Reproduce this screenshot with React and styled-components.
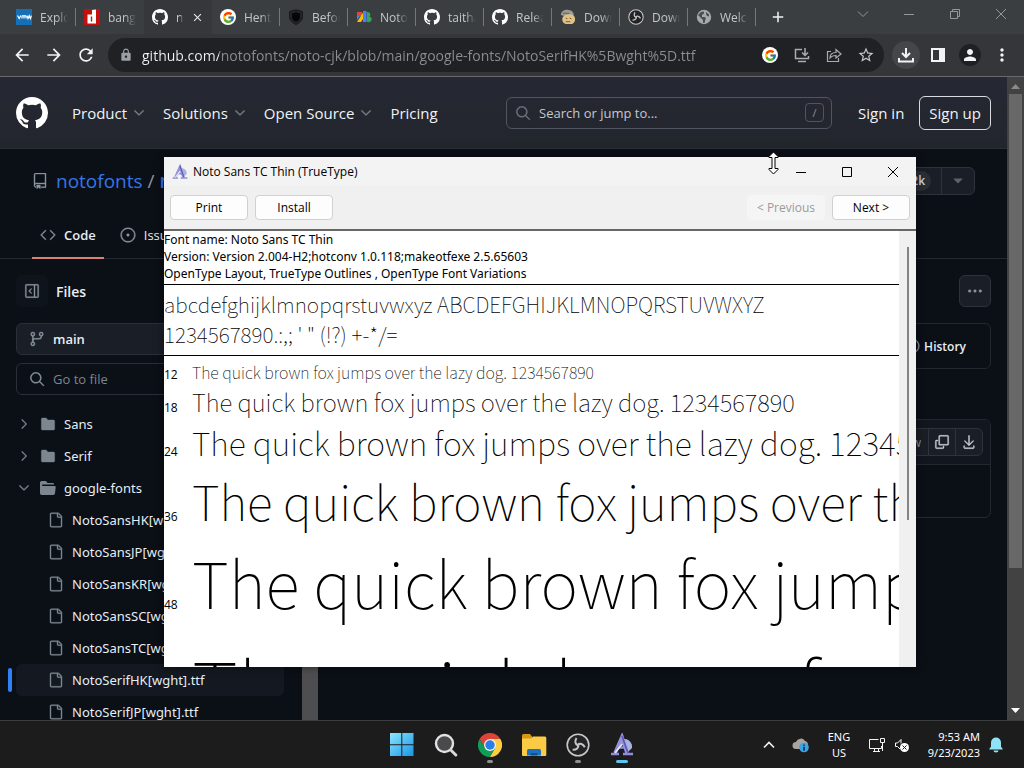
import React from "react";
import styled, { createGlobalStyle, css } from "styled-components";
import {
  GoRepo,
  GoCode,
  GoIssueOpened,
  GoSidebarExpand,
  GoGitBranch,
  GoSearch,
  GoChevronDown,
  GoChevronRight,
  GoFileDirectoryFill,
  GoFile,
  GoHistory,
  GoCopy,
  GoDownload,
  GoKebabHorizontal,
  GoTriangleDown,
} from "react-icons/go";
import {
  MdArrowBack,
  MdArrowForward,
  MdRefresh,
  MdLock,
  MdStarBorder,
  MdPerson,
  MdMoreVert,
  MdAdd,
  MdClose,
} from "react-icons/md";
import { FcGoogle } from "react-icons/fc";

const GlobalStyle = createGlobalStyle`
  * {
    box-sizing: border-box;
  }
  body {
    margin: 0;
    background: #0b0f16;
    font-family: "Open Sans", "Noto Sans", sans-serif;
    font-size: 13px;
    color: #e6edf3;
  }
  button, input {
    font: inherit;
    color: inherit;
    border: 0;
    padding: 0;
    margin: 0;
    background: none;
  }
  a {
    color: inherit;
    text-decoration: none;
  }
  ul {
    list-style: none;
    margin: 0;
    padding: 0;
  }
  svg {
    display: block;
    flex: none;
  }
`;

const Desktop = styled.div`
  position: relative;
  display: flex;
  flex-direction: column;
  height: 100vh;
  overflow: hidden;
`;

const Browser = styled.div`
  flex: 1;
  min-height: 0;
  display: flex;
  flex-direction: column;
`;

/* ---- tab strip ---- */

const TabStrip = styled.div`
  display: flex;
  height: 34px;
  padding-left: 8px;
  background: #3b3e41;
`;

const Tab = styled.div`
  display: flex;
  align-items: center;
  gap: 8px;
  width: 68px;
  padding: 0 8px;
  position: relative;
  font-size: 12px;
  color: #c4c7ca;

  ${(p) =>
    p.$active &&
    css`
      background: #36373b;
    `}
  ${(p) =>
    p.$line &&
    css`
      &::after {
        content: "";
        position: absolute;
        right: 0;
        top: 8px;
        width: 1px;
        height: 18px;
        background: #75787b;
      }
    `}
`;

const TabTitle = styled.span`
  flex: 1;
  overflow: hidden;
  white-space: nowrap;
  mask-image: linear-gradient(90deg, #000 60%, transparent);
`;

const IconButton = styled.button`
  display: flex;
  align-items: center;
  justify-content: center;
  width: ${(p) => p.$w || 32}px;
  height: ${(p) => p.$h || 32}px;
  color: ${(p) => p.$color || "#f1f3f4"};
`;

const WindowButtons = styled.div`
  display: flex;
  margin-left: auto;
`;

/* ---- toolbar ---- */

const Toolbar = styled.div`
  display: flex;
  align-items: center;
  height: 43px;
  padding: 0 6px;
  background: #35363a;
  border-bottom: 1px solid #696a6d;
`;

const Omnibox = styled.label`
  flex: 1;
  display: flex;
  align-items: center;
  height: 34px;
  margin: 0 6px;
  padding: 0 2px 0 11px;
  border-radius: 17px;
  background: #202124;
  color: #bdc1c6;
`;

/* host name is brighter than the path behind it */
const Url = styled.input`
  flex: 1;
  min-width: 0;
  margin-left: 9px;
  font-size: 14px;
  color: transparent;
  background: linear-gradient(90deg, #f1f3f4 77px, #8b8e92 77px);
  background-clip: text;
  outline: none;
`;

const Round = styled.span`
  display: flex;
  align-items: center;
  justify-content: center;
  width: ${(p) => p.$size}px;
  height: ${(p) => p.$size}px;
  border-radius: 50%;
  background: ${(p) => p.$bg};
`;

/* ---- page ---- */

const Viewport = styled.div`
  flex: 1;
  min-height: 0;
  display: flex;
`;

const Page = styled.div`
  flex: 1;
  min-width: 0;
  overflow: hidden;

  /* the 24px octicons get too thin at 16px */
  svg[viewBox="0 0 24 24"] {
    stroke: currentColor;
    stroke-width: 0.6px;
  }
`;

const ScrollTrack = styled.div`
  display: flex;
  flex-direction: column;
  align-items: center;
  justify-content: space-between;
  width: 17px;
  padding: 7px 0;
  background: #424242;
`;

const ScrollThumb = styled.div`
  width: 13px;
  height: 474px;
  margin: 5px 0 auto;
  background: #686868;
`;

const SiteHeader = styled.header`
  display: flex;
  align-items: center;
  height: 72px;
  padding: 0 16px;
  background: linear-gradient(#262834, #22262c);
  border-bottom: 1px solid #2b2f36;
  font-size: 15px;
  color: #f0f3f6;
`;

const SiteNav = styled.nav`
  display: flex;
  gap: 16px;
  margin-left: 24px;
`;

const NavLink = styled.a`
  display: flex;
  align-items: center;
  gap: 4px;
  white-space: nowrap;

  svg {
    color: #7c818b;
  }
`;

const SiteSearch = styled.label`
  display: flex;
  align-items: center;
  gap: 8px;
  width: 326px;
  height: 32px;
  margin-left: auto;
  padding: 0 7px 0 8px;
  border: 1px solid #51555f;
  border-radius: 6px;
  color: #70757f;

  input {
    flex: 1;
    min-width: 0;
    font-size: 13px;
    outline: none;
  }
  input::placeholder {
    color: #c3c8cf;
    opacity: 1;
  }
`;

const SlashKey = styled.kbd`
  width: 19px;
  height: 19px;
  border: 1px solid #51555f;
  border-radius: 4px;
  font: 11px/17px "Open Sans", sans-serif;
  text-align: center;
  color: #8b9099;
`;

const SignIn = styled.a`
  margin-left: 26px;
`;

const SignUp = styled.a`
  margin-left: 15px;
  padding: 0 9px;
  line-height: 32px;
  border: 1px solid #d7dade;
  border-radius: 6px;
`;

const RepoHeader = styled.div`
  display: flex;
  align-items: center;
  justify-content: space-between;
  height: 63px;
  padding: 0 32px;
`;

const RepoTitle = styled.div`
  display: flex;
  align-items: center;
  gap: 8px;
  font-size: 19px;
  color: #8b949e;

  a {
    color: #3576e8;
  }
  a:last-child {
    font-weight: 600;
  }
`;

const Split = styled.div`
  display: flex;
  height: 28px;
  border: 1px solid #2e333b;
  border-radius: 6px;
  background: #1a1e26;
  color: #8d949d;
  font-size: 12px;

  button {
    display: flex;
    align-items: center;
    justify-content: center;
    gap: 6px;
    padding: 0 ${(p) => p.$pad}px;
    white-space: nowrap;
  }
  button + button {
    width: ${(p) => p.$cell}px;
    padding: 0;
    border-left: 1px solid #2e333b;
  }
`;

const Counter = styled.span`
  padding: 0 6px;
  line-height: 20px;
  border-radius: 10px;
  background: #2a2e35;
  color: #c9d1d9;
  font-weight: 600;
`;

const RepoTabs = styled.nav`
  display: flex;
  gap: 8px;
  height: 47px;
  padding: 0 32px;
  border-bottom: 1px solid #23282f;
`;

const RepoTab = styled.a`
  display: flex;
  align-items: center;
  gap: 8px;
  height: 47px;
  padding: 0 8px;
  border-bottom: 2px solid ${(p) => (p.$active ? "#d98175" : "transparent")};
  font-weight: ${(p) => (p.$active ? 600 : 400)};

  svg {
    color: #8b949e;
  }
`;

const Columns = styled.div`
  display: flex;
`;

const Sidebar = styled.aside`
  width: 302px;
  padding: 16px 18px 0 16px;
`;

const SideScroll = styled.div`
  width: 16px;
  background: #4e4e50;
`;

const SideHead = styled.div`
  display: flex;
  align-items: center;
  gap: 8px;
  height: 32px;
  margin-bottom: 16px;

  h2 {
    margin: 0;
    font-size: 14px;
    font-weight: 600;
  }
  button {
    border-radius: 6px;
    background: #0f131b;
  }
`;

const field = css`
  display: flex;
  align-items: center;
  gap: 8px;
  width: 100%;
  height: 32px;
  padding: 0 12px;
  margin-bottom: 8px;
  border: 1px solid #2b3038;
  border-radius: 6px;
  color: #8b949e;
`;

const BranchButton = styled.button`
  ${field}
  background: #1a1e27;

  span {
    color: #e6edf3;
    font-weight: 600;
  }
`;

const FileSearch = styled.label`
  ${field}
  margin-bottom: 13px;

  input {
    flex: 1;
    min-width: 0;
    outline: none;
  }
  input::placeholder {
    color: #7d8590;
    opacity: 1;
  }
`;

const TreeRow = styled.li`
  position: relative;
  border-radius: 6px;
  font-family: "Noto Sans", sans-serif;
  background: ${(p) => (p.$selected ? "#141820" : "none")};

  ${(p) =>
    p.$selected &&
    css`
      &::before {
        content: "";
        position: absolute;
        left: -8px;
        top: 4px;
        width: 4px;
        height: 24px;
        border-radius: 2px;
        background: #2f81f7;
      }
    `}

  a {
    display: flex;
    align-items: center;
    gap: 8px;
    height: 32px;
    padding-left: ${(p) => (p.$file ? 32 : 0)}px;
    white-space: nowrap;
  }
  svg {
    color: #7d8590;
  }
`;

const Main = styled.main`
  flex: 1;
  padding: 16px 16px 0;
`;

const MoreButton = styled.button`
  display: flex;
  align-items: center;
  justify-content: center;
  width: 32px;
  height: 32px;
  margin: 0 0 16px auto;
  border: 1px solid #2e333b;
  border-radius: 6px;
  background: #1a1e26;
  color: #8b949e;
`;

const CommitBox = styled.div`
  display: flex;
  align-items: center;
  justify-content: flex-end;
  height: 46px;
  padding: 0 24px;
  margin-bottom: 50px;
  border: 1px solid #23282f;
  border-radius: 6px;
  font-size: 12px;
  font-weight: 600;

  a {
    display: flex;
    align-items: center;
    gap: 4px;
  }
  svg {
    color: #8b949e;
  }
`;

const FileBox = styled.div`
  height: 99px;
  border: 1px solid #23282f;
  border-radius: 6px;
  overflow: hidden;
`;

const FileBar = styled.div`
  display: flex;
  align-items: center;
  justify-content: flex-end;
  height: 45px;
  padding: 0 7px;
  border-bottom: 1px solid #23282f;
  background: #12161e;
`;

/* ---- font viewer ---- */

const Dialog = styled.section`
  position: absolute;
  left: 164px;
  top: 157px;
  display: flex;
  flex-direction: column;
  width: 752px;
  height: 510px;
  background: #fff;
  color: #000;
  font-size: 12px;
  box-shadow: 0 0 8px rgba(0, 0, 0, 0.5);
`;

const TitleBar = styled.div`
  display: flex;
  align-items: center;
  height: 29px;
  padding-left: 8px;
  background: #f3f3f3;

  h1 {
    flex: 1;
    margin: 0 0 0 5px;
    font-size: 12px;
    font-weight: 400;
  }
`;

const DialogTools = styled.div`
  display: flex;
  align-items: center;
  gap: 7px;
  height: 45px;
  padding: 0 6px;
  background: #f0f0f0;
  border-bottom: 2px solid #676767;
`;

const ToolButton = styled.button`
  width: 78px;
  height: 25px;
  margin-left: ${(p) => (p.$push ? "auto" : 0)};
  border: 1px solid #d0d0d0;
  border-radius: 4px;
  background: #fdfdfd;
  color: #000;

  &:disabled {
    border-color: #f5f5f5;
    background: #f5f5f5;
    color: #9a9a9a;
  }
`;

const DialogBody = styled.div`
  flex: 1;
  min-height: 0;
  display: flex;
`;

const Sheet = styled.div`
  flex: 1;
  min-width: 0;
  overflow: hidden;
`;

const DialogScroll = styled.div`
  display: flex;
  justify-content: center;
  width: 17px;
  padding-top: 16px;
  background: #f0f0f0;

  &::before {
    content: "";
    width: 2px;
    height: 273px;
    background: #858585;
  }
`;

const Facts = styled.p`
  margin: 0;
  height: 54px;
  font-family: "Noto Sans", sans-serif;
  line-height: 17px;
  border-bottom: 1px solid #000;
  white-space: nowrap;
`;

const sample = css`
  font-family: "Noto Sans CJK TC", "Noto Sans", sans-serif;
  font-weight: 100;
  white-space: nowrap;
`;

const Alphabet = styled.p`
  ${sample}
  margin: 0;
  padding: 4px 0 6px;
  font-size: 21px;
  line-height: 30px;
  border-bottom: 1px solid #000;
`;

const Samples = styled.div`
  padding-top: 4px;
`;

const SampleRow = styled.div`
  display: flex;
  align-items: baseline;

  small {
    flex: none;
    width: 28px;
    font-size: 12px;
  }
  span {
    ${sample}
    font-size: ${(p) => p.$size}px;
    line-height: ${(p) => p.$line}px;
  }
`;

const Pointer = styled.div`
  position: absolute;
  left: 767px;
  top: 151px;
`;

/* ---- taskbar ---- */

const Taskbar = styled.footer`
  display: grid;
  grid-template-columns: 1fr auto 1fr;
  height: 48px;
  background: #1c1c1c;
  border-top: 1px solid #3c3d3f;
`;

const Apps = styled.div`
  grid-column: 2;
  display: flex;
`;

const AppButton = styled.button`
  position: relative;
  display: flex;
  align-items: center;
  justify-content: center;
  width: 44px;

  &::after {
    content: "";
    position: absolute;
    bottom: 5px;
    width: ${(p) => (p.$state === "active" ? 12 : 6)}px;
    height: 3px;
    border-radius: 2px;
    background: ${(p) =>
      p.$state === "active" ? "#5cc5ee" : p.$state ? "#8f8f8f" : "none"};
  }
`;

const Tray = styled.div`
  display: flex;
  align-items: center;
  justify-content: flex-end;
  padding-right: 12px;
  font-family: "Noto Sans", sans-serif;
  font-size: 11px;
  line-height: 16px;
  color: #fff;
`;

const TrayText = styled.div`
  width: ${(p) => p.$w}px;
  text-align: ${(p) => p.$align};
`;

const GithubMark = ({ size }) => (
  <svg width={size} height={size} viewBox="0 0 16 16" fill="#fff">
    <path d="M8 0c4.42 0 8 3.58 8 8a8.013 8.013 0 0 1-5.45 7.59c-.4.08-.55-.17-.55-.38 0-.27.01-1.13.01-2.2 0-.75-.25-1.23-.54-1.48 1.78-.2 3.65-.88 3.65-3.95 0-.88-.31-1.59-.82-2.15.08-.2.36-1.02-.08-2.12 0 0-.67-.22-2.2.82-.64-.18-1.32-.27-2-.27-.68 0-1.36.09-2 .27-1.53-1.03-2.2-.82-2.2-.82-.44 1.1-.16 1.92-.08 2.12-.51.56-.82 1.28-.82 2.15 0 3.06 1.86 3.75 3.64 3.95-.23.2-.44.55-.51 1.07-.46.21-1.61.55-2.33-.66-.15-.24-.6-.83-1.23-.82-.67.01-.27.38.01.53.34.19.73.9.82 1.13.16.45.68 1.31 2.69.94 0 .67.01 1.3.01 1.49 0 .21-.15.45-.55.38A7.995 7.995 0 0 1 0 8c0-4.42 3.58-8 8-8Z" />
  </svg>
);

const OpenFolder = () => (
  <svg width="16" height="16" viewBox="0 0 16 16" fill="currentColor">
    <path d="M.513 1.513A1.75 1.75 0 0 1 1.75 1h3.5c.55 0 1.07.26 1.4.7l.9 1.2a.25.25 0 0 0 .2.1H13a1 1 0 0 1 1 1v.5H2.75a.75.75 0 0 0 0 1.5h11.978a1 1 0 0 1 .994 1.117L15 13.25A1.75 1.75 0 0 1 13.25 15H1.75A1.75 1.75 0 0 1 0 13.25V2.75c0-.464.184-.91.513-1.237Z" />
  </svg>
);

const VmwIcon = () => (
  <svg width="16" height="16" viewBox="0 0 16 16">
    <path fill="#1670b8" d="M0 0h16v16H0z" />
    <path
      d="M1.5 6.5l1.7 3 1.6-3M6 9.6V7.5c0-1.3 2-1.3 2 0v2.1m0-2.1c0-1.3 2-1.3 2 0v2.1M11 6.6l1 3 1.2-3 1.2 3 1-3"
      fill="none"
      stroke="#fff"
      strokeWidth="1.2"
    />
  </svg>
);

const RedIcon = () => (
  <svg width="16" height="16" viewBox="0 0 16 16">
    <rect width="16" height="16" rx="1" fill="#c4100f" />
    <path fill="#fff" d="M8 1l4-.5V14.500H3.500V5.500H8zM6.800 7.500v5h1.400v-5z" fillRule="evenodd" />
  </svg>
);

const GIcon = () => (
  <Round $size={16} $bg="#fff">
    <FcGoogle size={13} />
  </Round>
);

const ShieldIcon = () => (
  <svg width="16" height="16" viewBox="0 0 16 16">
    <path d="M8 .8l6.500 1.700v5.500c0 3.500-3 6-6.500 7.500C4.500 14 1.500 11.500 1.500 8V2.500z" fill="#222527" stroke="#17191b" />
    <path d="M8 3.500l4 1v3.800c0 2-1.800 3.500-4 4.500-2.200-1-4-2.500-4-4.500V4.500z" fill="#050607" />
  </svg>
);

const NotoIcon = () => (
  <svg width="16" height="16" viewBox="0 0 16 16">
    <path fill="#ea4335" d="M1 3h5v4H1z" />
    <path fill="#fbbc04" d="M8 2L1 13h4l4-6z" />
    <path fill="#4285f4" d="M7 2h3.500v11H7zM1 7h3l-3 4z" />
    <path fill="#34a853" d="M11.500 3a2.600 2.600 0 012 4.500A2.800 2.800 0 0112 13h-1V3z" />
  </svg>
);

const DogIcon = () => (
  <svg width="16" height="16" viewBox="0 0 17 16">
    <path fill="#9d9d98" d="M1 6C1 2 5 0 9 .5c4 .3 6 3 5.500 6L8 8z" />
    <path fill="#e2c386" d="M3 8c3-3 9-4 12-1 2 3 1 8-3 8.500H6C3 14.500 1.500 11 3 8z" />
    <path d="M3 4h7M6 9l2 1m2-1l2 1M6 13h5" stroke="#6d5839" fill="none" />
  </svg>
);

const ObsIcon = ({ size }) => (
  <svg width={size} height={size} viewBox="0 0 24 24">
    <circle cx="12" cy="12" r="10.800" fill="#232325" stroke="#c8c8c8" strokeWidth="1.600" />
    <g fill="none" stroke="#c4c4c4" strokeWidth="2">
      <path d="M12 12.500c-2.800-1.200-3.600-4.200-1.500-7.500" />
      <path d="M12 12.500c-2.800-1.200-3.600-4.200-1.500-7.500" transform="rotate(120 12 12)" />
      <path d="M12 12.500c-2.800-1.200-3.600-4.200-1.500-7.500" transform="rotate(240 12 12)" />
    </g>
  </svg>
);

const GlobeIcon = () => (
  <svg width="16" height="16" viewBox="0 0 16 16">
    <circle cx="8" cy="8" r="7.200" fill="#a5a9ad" />
    <path fill="#4b4e51" d="M2 6l3-3 3-.5v2L6 6v2h3l1 2-1 1v2.500L7 14v-3L5 9zM10 3l3 2.500v2l-2-.5-1-2z" />
  </svg>
);

const FontIcon = ({ size }) => (
  <svg width={size} height={size} viewBox="0 0 24 24">
    <path d="M13 6a8 8 0 019 9l-4 4-8-10z" fill="#a9b4de" />
    <path d="M5 20L12 4l5 16" fill="none" stroke="#9791dc" strokeWidth="3.600" />
    <path d="M6 14.500h10M1 21h8m4 0h10" stroke="#8f8ddc" strokeWidth="2.400" />
    <path d="M12 3l6 17" stroke="#5d55b4" strokeWidth="1.600" />
    <path d="M5 20l7-9" stroke="#e4e6f0" strokeWidth="1.800" />
  </svg>
);

const ChromeIcon = () => (
  <svg width="24" height="24" viewBox="0 0 24 24">
    <path fill="#db4437" d="M1.600 6A12 12 0 0122.400 6H12L6.800 15z" />
    <path fill="#0f9d58" d="M1.600 6A12 12 0 0012 24l5.200-9H6.800z" />
    <path fill="#ffcd40" d="M22.400 6A12 12 0 0112 24l5.200-9L12 6z" />
    <circle cx="12" cy="12" r="6" fill="#f1f1f1" />
    <circle cx="12" cy="12" r="4.700" fill="#2d7de9" />
  </svg>
);

const WindowsIcon = () => (
  <svg width="24" height="24" viewBox="0 0 24 24">
    <defs>
      <linearGradient id="win" x2="1" y2="1">
        <stop stopColor="#8be6fb" />
        <stop offset="1" stopColor="#1795e8" />
      </linearGradient>
    </defs>
    <path fill="url(#win)" d="M0 0h11.300v11.200H0zM12.300 0H23.500v11.200H12.300zM0 12.200h11.300V23H0zM12.300 12.200H23.500V23H12.300z" />
  </svg>
);

const TaskSearchIcon = () => (
  <svg width="24" height="24" viewBox="0 0 24 24">
    <circle cx="10.500" cy="10.500" r="8.500" fill="#4a4a4c" stroke="#e2e2e2" strokeWidth="2.400" />
    <path d="M16.800 17l5 5" stroke="#d9d9d9" strokeWidth="3" strokeLinecap="round" />
  </svg>
);

const ExplorerIcon = () => (
  <svg width="26" height="24" viewBox="0 0 26 24">
    <path fill="#d9980f" d="M1 2.500Q1 1 2.500 1H9l3 4v3H1z" />
    <path fill="#fbcb45" d="M1 5.500h9L12 3.500h12q1.300 0 1.300 1.500v17q0 1-1 1H2q-1 0-1-1z" />
    <path fill="#1a72c0" d="M6 22.500v-5Q6 16 7.500 16h11q1.500 0 1.500 1.500v5z" />
    <path fill="#12508e" d="M9.500 22.500V20h7v2.500z" />
  </svg>
);

const LineIcon = ({ d, size = 16, w = 1 }) => (
  <svg width={size} height={size} viewBox="0 0 16 16" fill="none" stroke="currentColor" strokeWidth={w}>
    <path d={d} />
  </svg>
);

const icons = {
  min: "M3 8.500h10",
  max: "M3.500 3.500h9v9h-9z",
  restore: "M3.500 5.500h7v7h-7zM5.500 5.500v-2h7v7h-2",
  close: "M3 3l10 10M13 3L3 13",
  down: "M3 5.500l5 5 5-5",
  up: "M3 10.500l5-5 5 5",
  install: "M8 2.500H1.500v9h13V9M4 14.500h8M11 1v7M8 5.500l3 3 3-3",
  share: "M5 4.500H1.500v10h11V11M4 11c0-4 3-5.500 6-5.500V2.500l5 4.500-5 4V8.500c-3 0-4.500.5-6 2.500z",
  download: "M8 1v8.500M4 6l4 4 4-4M1 11v3.500h14V11",
};

const tabs = [
  { title: "Explore", icon: <VmwIcon />, line: true },
  { title: "bang", icon: <RedIcon /> },
  { title: "n", icon: <GithubMark size={16} />, active: true },
  { title: "Hentai", icon: <GIcon />, line: true },
  { title: "Before", icon: <ShieldIcon />, line: true },
  { title: "Noto", icon: <NotoIcon />, line: true },
  { title: "taithan", icon: <GithubMark size={16} />, line: true },
  { title: "Releas", icon: <GithubMark size={16} />, line: true },
  { title: "Down", icon: <DogIcon />, line: true },
  { title: "Down", icon: <ObsIcon size={16} />, line: true },
  { title: "Welco", icon: <GlobeIcon />, line: true },
];

const files = [
  "NotoSansHK[wght].ttf",
  "NotoSansJP[wght].ttf",
  "NotoSansKR[wght].ttf",
  "NotoSansSC[wght].ttf",
  "NotoSansTC[wght].ttf",
  "NotoSerifHK[wght].ttf",
  "NotoSerifJP[wght].ttf",
];

const sizes = [
  { pt: 12, px: 16, line: 24 },
  { pt: 18, px: 24, line: 35 },
  { pt: 24, px: 32, line: 46 },
  { pt: 36, px: 48, line: 70 },
  { pt: 48, px: 64, line: 93 },
  { pt: 60, px: 80, line: 116 },
];

const BrowserChrome = () => (
  <>
    <TabStrip>
      {tabs.map((tab, i) => (
        <Tab key={i} $active={tab.active} $line={tab.line}>
          {tab.icon}
          <TabTitle>{tab.title}</TabTitle>
          {tab.active && <MdClose size={13} color="#e8eaed" />}
        </Tab>
      ))}
      <IconButton $w={44} $h={34} aria-label="New tab">
        <MdAdd size={18} />
      </IconButton>
      <WindowButtons>
        {["down", "min", "restore", "close"].map((name) => (
          <IconButton key={name} $w={46} $h={28} $color="#95989b" aria-label={name}>
            <LineIcon d={icons[name]} />
          </IconButton>
        ))}
      </WindowButtons>
    </TabStrip>
    <Toolbar>
      <IconButton aria-label="Back">
        <MdArrowBack size={20} />
      </IconButton>
      <IconButton aria-label="Forward">
        <MdArrowForward size={20} />
      </IconButton>
      <IconButton aria-label="Reload">
        <MdRefresh size={20} />
      </IconButton>
      <Omnibox>
        <MdLock size={14} color="#9aa0a6" />
        <Url
          aria-label="Address"
          defaultValue="github.com/notofonts/noto-cjk/blob/main/google-fonts/NotoSerifHK%5Bwght%5D.ttf"
        />
        <IconButton aria-label="Google">
          <GIcon />
        </IconButton>
        <IconButton $color="#a9acb0" aria-label="Install app">
          <LineIcon d={icons.install} w={1.5} />
        </IconButton>
        <IconButton $color="#a9acb0" aria-label="Share">
          <LineIcon d={icons.share} w={1.2} />
        </IconButton>
        <IconButton $color="#c4c7ca" aria-label="Bookmark">
          <MdStarBorder size={18} />
        </IconButton>
      </Omnibox>
      <IconButton aria-label="Downloads">
        <Round $size={28} $bg="#45464a">
          <LineIcon d={icons.download} w={2} />
        </Round>
      </IconButton>
      <IconButton aria-label="Side panel">
        <svg width="14" height="14" viewBox="0 0 14 14">
          <path fill="#f1f3f4" fillRule="evenodd" d="M0 0h14v14H0zM2 2v10h6V2z" />
        </svg>
      </IconButton>
      <IconButton aria-label="Profile">
        <Round $size={22} $bg="#1f2023">
          <MdPerson size={18} />
        </Round>
      </IconButton>
      <IconButton aria-label="Menu">
        <MdMoreVert size={20} />
      </IconButton>
    </Toolbar>
  </>
);

const GithubPage = () => (
  <Page>
    <SiteHeader>
      <GithubMark size={32} />
      <SiteNav>
        {["Product", "Solutions", "Open Source"].map((name) => (
          <NavLink href="#" key={name}>
            {name}
            <GoChevronDown size={16} />
          </NavLink>
        ))}
        <NavLink href="#">Pricing</NavLink>
      </SiteNav>
      <SiteSearch>
        <GoSearch size={16} />
        <input placeholder="Search or jump to..." aria-label="Search or jump to" />
        <SlashKey>/</SlashKey>
      </SiteSearch>
      <SignIn href="#">Sign in</SignIn>
      <SignUp href="#">Sign up</SignUp>
    </SiteHeader>

    <RepoHeader>
      <RepoTitle>
        <GoRepo size={16} />
        <span>
          <a href="#">notofonts</a> / <a href="#">noto-cjk</a>
        </span>
      </RepoTitle>
      <Split $cell={33} $pad={10}>
        <button>
          Star <Counter>2k</Counter>
        </button>
        <button aria-label="Add to list">
          <GoTriangleDown size={16} color="#5c636d" />
        </button>
      </Split>
    </RepoHeader>
    <RepoTabs>
      <RepoTab href="#" $active>
        <GoCode size={16} />
        Code
      </RepoTab>
      <RepoTab href="#">
        <GoIssueOpened size={16} />
        Issues
      </RepoTab>
    </RepoTabs>

    <Columns>
      <Sidebar>
        <SideHead>
          <IconButton $color="#8b949e" aria-label="Collapse file tree">
            <GoSidebarExpand size={16} />
          </IconButton>
          <h2>Files</h2>
        </SideHead>
        <BranchButton>
          <GoGitBranch size={16} />
          <span>main</span>
        </BranchButton>
        <FileSearch>
          <GoSearch size={16} />
          <input placeholder="Go to file" aria-label="Go to file" />
        </FileSearch>
        <ul>
          {["Sans", "Serif"].map((name) => (
            <TreeRow key={name}>
              <a href="#">
                <GoChevronRight size={16} />
                <GoFileDirectoryFill size={16} />
                {name}
              </a>
            </TreeRow>
          ))}
          <TreeRow>
            <a href="#">
              <GoChevronDown size={16} />
              <OpenFolder />
              google-fonts
            </a>
          </TreeRow>
          {files.map((name) => (
            <TreeRow key={name} $file $selected={name.includes("SerifHK")}>
              <a href="#">
                <GoFile size={16} />
                {name}
              </a>
            </TreeRow>
          ))}
        </ul>
      </Sidebar>
      <SideScroll />
      <Main>
        <MoreButton aria-label="More options">
          <GoKebabHorizontal size={16} />
        </MoreButton>
        <CommitBox>
          <a href="#">
            <GoHistory size={16} />
            History
          </a>
        </CommitBox>
        <FileBox>
          <FileBar>
            <Split $cell={27} $pad={7}>
              <button>Raw</button>
              <button aria-label="Copy">
                <GoCopy size={16} color="#c9d1d9" />
              </button>
              <button aria-label="Download">
                <GoDownload size={16} color="#c9d1d9" />
              </button>
            </Split>
          </FileBar>
        </FileBox>
      </Main>
    </Columns>
  </Page>
);

const FontViewer = () => (
  <Dialog>
    <TitleBar>
      <FontIcon size={16} />
      <h1>Noto Sans TC Thin (TrueType)</h1>
      {["min", "max", "close"].map((name) => (
        <IconButton key={name} $w={46} $h={28} $color="#000" aria-label={name}>
          <LineIcon d={icons[name]} />
        </IconButton>
      ))}
    </TitleBar>
    <DialogTools>
      <ToolButton>Print</ToolButton>
      <ToolButton>Install</ToolButton>
      <ToolButton $push disabled>
        &lt; Previous
      </ToolButton>
      <ToolButton>Next &gt;</ToolButton>
    </DialogTools>
    <DialogBody>
      <Sheet>
        <Facts>
          Font name: Noto Sans TC Thin
          <br />
          Version: Version 2.004-H2;hotconv 1.0.118;makeotfexe 2.5.65603
          <br />
          OpenType Layout, TrueType Outlines , OpenType Font Variations
        </Facts>
        <Alphabet>
          abcdefghijklmnopqrstuvwxyz ABCDEFGHIJKLMNOPQRSTUVWXYZ
          <br />
          1234567890.:,; ' " (!?) +-*/=
        </Alphabet>
        <Samples>
          {sizes.map((s) => (
            <SampleRow key={s.pt} $size={s.px} $line={s.line}>
              <small>{s.pt}</small>
              <span>The quick brown fox jumps over the lazy dog. 1234567890</span>
            </SampleRow>
          ))}
        </Samples>
      </Sheet>
      <DialogScroll />
    </DialogBody>
  </Dialog>
);

const apps = [
  { name: "Start", icon: <WindowsIcon /> },
  { name: "Search", icon: <TaskSearchIcon /> },
  { name: "Chrome", icon: <ChromeIcon />, state: "open" },
  { name: "Explorer", icon: <ExplorerIcon /> },
  { name: "OBS", icon: <ObsIcon size={24} />, state: "open" },
  { name: "Font Viewer", icon: <FontIcon size={24} />, state: "active" },
];

const SystemBar = () => (
  <Taskbar>
    <Apps>
      {apps.map((app) => (
        <AppButton key={app.name} $state={app.state} aria-label={app.name}>
          {app.icon}
        </AppButton>
      ))}
    </Apps>
    <Tray>
      <IconButton aria-label="Hidden icons">
        <LineIcon d={icons.up} w={1.6} />
      </IconButton>
      <IconButton aria-label="OneDrive">
        <svg width="18" height="16" viewBox="0 0 18 16">
          <path fill="#a9a4a2" d="M4 12a3.500 3.500 0 010-7 5 5 0 019-1 4 4 0 013 4l-5 4z" />
          <circle cx="12" cy="10.500" r="4.800" fill="#3ba4e6" />
          <path d="M12 7.500v1.300m0 1v4" stroke="#0c2c46" strokeWidth="1.600" />
        </svg>
      </IconButton>
      <TrayText $w={44} $align="center">
        ENG
        <br />
        US
      </TrayText>
      <IconButton aria-label="Network">
        <LineIcon d="M9.500 2.500h-9v9h12V9M4 14.500h7M5.500 12v2.500M9.500 12v2.500M11.500 1.500h4v4h-4zM13.500 6v8" />
      </IconButton>
      <IconButton $w={18} aria-label="Volume muted">
        <svg width="16" height="16" viewBox="0 0 16 16">
          <path d="M6 12L3.500 9.500h-2V6h2L7 2.500v4" fill="none" stroke="#fff" />
          <circle cx="10.500" cy="10.500" r="4.500" fill="#fff" />
          <path d="M8.500 8.500l4 4m0-4l-4 4" stroke="#1c1c1c" />
        </svg>
      </IconButton>
      <TrayText $w={69} $align="right">
        9:53 AM
        <br />
        9/23/2023
      </TrayText>
      <IconButton aria-label="Notifications">
        <svg width="16" height="16" viewBox="0 0 16 16">
          <path fill="#8fe3f5" d="M8 .5a5 5 0 015 5v4l2 3H1l2-3v-4a5 5 0 015-5zM5.500 13.500h5a2.500 2 0 01-5 0z" />
        </svg>
      </IconButton>
    </Tray>
  </Taskbar>
);

export default function App() {
  return (
    <Desktop>
      <GlobalStyle />
      <Browser>
        <BrowserChrome />
        <Viewport>
          <GithubPage />
          <ScrollTrack>
            <svg width="9" height="5" viewBox="0 0 9 5">
              <path fill="#8a8a8a" d="M0 5l4.500-5L9 5z" />
            </svg>
            <ScrollThumb />
            <svg width="9" height="5" viewBox="0 0 9 5">
              <path fill="#fff" d="M0 0l4.500 5L9 0z" />
            </svg>
          </ScrollTrack>
        </Viewport>
      </Browser>
      <SystemBar />
      <FontViewer />
      <Pointer>
        <svg width="13" height="24" viewBox="0 0 13 24">
          <path
            d="M6.500 1L2 5.500V6.500h3v11H2v1l4.500 4.500 4.500-4.500v-1H8v-11h3v-1z"
            fill="#fff"
            stroke="#000"
            strokeWidth="1"
          />
        </svg>
      </Pointer>
    </Desktop>
  );
}
